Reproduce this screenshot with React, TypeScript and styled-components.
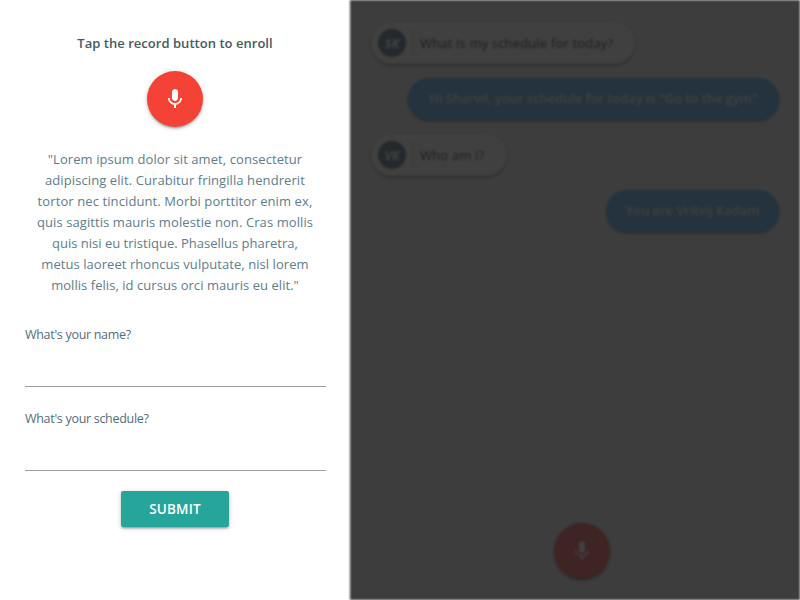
import React from "react";
import styled, { createGlobalStyle } from "styled-components";

const GlobalStyle = createGlobalStyle`
  * { box-sizing: border-box; }
  body {
    margin: 0;
    background: #fff;
    font-family: "Open Sans", "Noto Sans", sans-serif;
    overflow: hidden;
  }
`;

const Page = styled.div`
  display: flex;
  width: 800px;
  height: 600px;
`;

const Sidebar = styled.aside`
  width: 350px;
  height: 600px;
  padding: 33px 24px 0;
  display: flex;
  flex-direction: column;
  align-items: center;
  background: #fff;
`;

const Title = styled.h1`
  margin: 0 0 17px;
  font-size: 13px;
  line-height: 21px;
  font-weight: 600;
  letter-spacing: 0.03px;
  color: #455a64;
  white-space: nowrap;
`;

const RoundButton = styled.button<{ $muted?: boolean }>`
  flex: none;
  width: 56px;
  height: 56px;
  padding: 0;
  border: 0;
  border-radius: 50%;
  display: flex;
  align-items: center;
  justify-content: center;
  color: #fff;
  background: ${(p) => (p.$muted ? "#f88e86" : "#f44336")};
  box-shadow: 0 2px 2px rgba(0, 0, 0, 0.14), 0 3px 1px -2px rgba(0, 0, 0, 0.12),
    0 1px 5px rgba(0, 0, 0, 0.2);
`;

const Passage = styled.p`
  margin: 22px 0 0;
  font-size: 13px;
  line-height: 21px;
  color: #607d8b;
  text-align: center;
  white-space: nowrap;
`;

const Line = styled.span<{ $spacing: number }>`
  display: block;
  letter-spacing: ${(p) => p.$spacing}px;
`;

const Form = styled.form`
  width: 100%;
  margin-top: 28px;
  display: flex;
  flex-direction: column;
  align-items: center;
`;

const Field = styled.label`
  display: flex;
  flex-direction: column;
  align-self: flex-end;
  width: 301px;
  height: 84px;
  font-size: 12.5px;
  line-height: 21px;
  letter-spacing: -0.3px;
  color: #546e7a;
`;

const Input = styled.input`
  width: 100%;
  height: 42px;
  padding: 0;
  border: 0;
  border-bottom: 1px solid #9e9e9e;
  background: transparent;
  outline: none;
`;

const Submit = styled.button`
  width: 108px;
  height: 36px;
  margin-top: -1px;
  padding: 0;
  border: 0;
  border-radius: 2px;
  font-family: inherit;
  font-size: 13.5px;
  line-height: 36px;
  font-weight: 600;
  letter-spacing: 0.15px;
  color: #fff;
  background: #26a69a;
  box-shadow: 0 2px 2px rgba(0, 0, 0, 0.14), 0 3px 1px -2px rgba(0, 0, 0, 0.12),
    0 1px 5px rgba(0, 0, 0, 0.2);
`;

const Chat = styled.main`
  width: 450px;
  height: 600px;
  padding: 22px 21px 21px;
  display: flex;
  flex-direction: column;
  gap: 14px;
  background: #f5f5f5;
  filter: brightness(25%) blur(1px);
`;

const Bubble = styled.div<{ $reply?: boolean; $width: number }>`
  flex: none;
  align-self: ${(p) => (p.$reply ? "flex-end" : "flex-start")};
  width: ${(p) => p.$width}px;
  height: 42px;
  padding: ${(p) => (p.$reply ? "0 0 2px" : "0 0 1px 7px")};
  display: flex;
  align-items: center;
  justify-content: ${(p) => (p.$reply ? "center" : "flex-start")};
  border-radius: 21px;
  font-size: 13px;
  font-weight: ${(p) => (p.$reply ? 600 : 400)};
  letter-spacing: ${(p) => (p.$reply ? -0.05 : 0.17)}px;
  white-space: nowrap;
  color: ${(p) => (p.$reply ? "#fff" : "#6f7b80")};
  background: ${(p) => (p.$reply ? "#90caf9" : "#fff")};
  box-shadow: 0 2px 2px rgba(0, 0, 0, 0.12), 0 3px 1px -2px rgba(0, 0, 0, 0.1),
    0 1px 4px rgba(0, 0, 0, 0.15);
`;

const Avatar = styled.span`
  width: 28px;
  height: 28px;
  border-radius: 50%;
  display: flex;
  align-items: center;
  justify-content: center;
  font-size: 13px;
  font-style: italic;
  font-weight: 700;
  letter-spacing: -0.2px;
  color: #fff;
  background: #90a4ae;
`;

const Divider = styled.span`
  width: 1px;
  height: 28px;
  margin: 0 6px 0 7px;
  background: #e0e0e0;
`;

const Controls = styled.div`
  margin-top: auto;
  display: flex;
  justify-content: center;
  padding-left: 14px;
`;

const Mic = () => (
  <svg width="24" height="24" viewBox="0 0 24 24" fill="currentColor">
    <path d="M12 14c1.660 0 2.990-1.340 2.990-3L15 5c0-1.660-1.340-3-3-3S9 3.340 9 5v6c0 1.660 1.340 3 3 3zm5.300-3c0 3-2.540 5.100-5.300 5.100S6.700 14 6.700 11H5c0 3.410 2.720 6.230 6 6.720V21h2v-3.280c3.280-.480 6-3.300 6-6.720h-1.700z" />
  </svg>
);

const passage: [string, number][] = [
  ['"Lorem ipsum dolor sit amet, consectetur', 0.08],
  ["adipiscing elit. Curabitur fringilla hendrerit", 0.09],
  ["tortor nec tincidunt. Morbi porttitor enim ex,", 0.1],
  ["quis sagittis mauris molestie non. Cras mollis", 0.09],
  ["quis nisi eu tristique. Phasellus pharetra,", 0],
  ["metus laoreet rhoncus vulputate, nisl lorem", 0.06],
  ['mollis felis, id cursus orci mauris eu elit."', 0.05],
];

export default function App() {
  return (
    <>
      <GlobalStyle />
      <Page>
        <Sidebar>
          <Title>Tap the record button to enroll</Title>
          <RoundButton aria-label="Record"><Mic /></RoundButton>
          <Passage>
            {passage.map(([text, spacing]) => (
              <Line key={text} $spacing={spacing}>{text}</Line>
            ))}
          </Passage>
          <Form>
            <Field>What's your name?<Input /></Field>
            <Field>What's your schedule?<Input /></Field>
            <Submit type="button">SUBMIT</Submit>
          </Form>
        </Sidebar>
        <Chat>
          <Bubble $width={264}>
            <Avatar>SK</Avatar><Divider />What is my schedule for today?
          </Bubble>
          <Bubble $reply $width={371}>
            Hi Sharvil, your schedule for today is "Go to the gym"
          </Bubble>
          <Bubble $width={136}>
            <Avatar>VK</Avatar><Divider />Who am I?
          </Bubble>
          <Bubble $reply $width={173}>You are Vritvij Kadam</Bubble>
          <Controls>
            <RoundButton $muted aria-label="Speak"><Mic /></RoundButton>
          </Controls>
        </Chat>
      </Page>
    </>
  );
}
